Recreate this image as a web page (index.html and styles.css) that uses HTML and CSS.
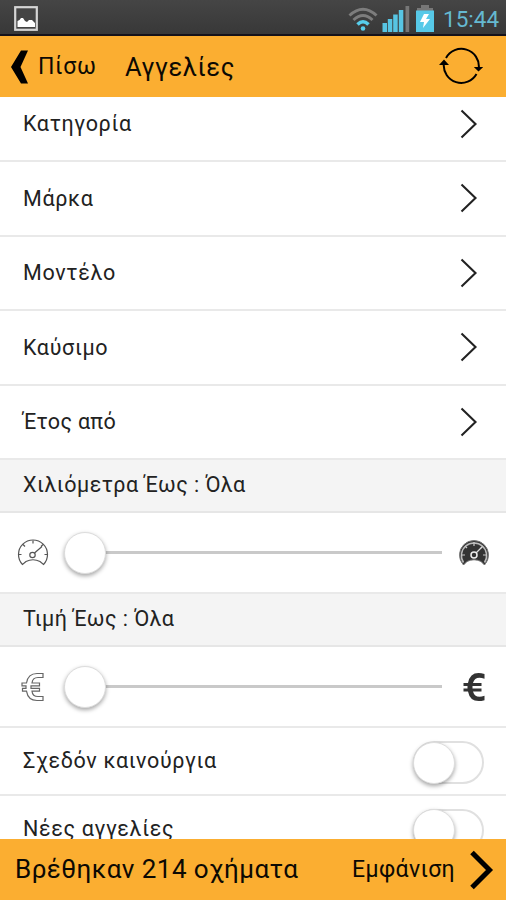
FILE: index.html
```html
<!DOCTYPE html>
<html lang="el">
<head>
<meta charset="utf-8">
<title>Αγγελίες</title>
<link rel="stylesheet" href="styles.css">
</head>
<body>
<svg width="0" height="0" class="defs">
  <symbol id="chevron" viewBox="0 0 18 30"><path d="M1.5 1.5 15.5 15 1.5 28.5" fill="none" stroke="#222" stroke-width="2.1"/></symbol>
</svg>
<div class="status">
  <svg class="picture" width="24" height="25" viewBox="0 0 24 25"><rect x="1.2" y="1.2" width="21.6" height="22.6" fill="#444" stroke="#d5d5d5" stroke-width="2.2"/><path d="M3.500 21v-6l2-1 1.500-2 2 0 2 3 2 1 2-2 3 0 3 3v4z" fill="#fff"/></svg>
  <svg class="wifi" width="30" height="24" viewBox="0 0 30 24" fill="none" stroke-width="3"><path d="M1.500 8.500Q15-4 28.500 8.500M5.500 13Q15 4 24.500 13" stroke="#7d7d7d"/><path d="M9.500 17.500Q15 12 20.500 17.500" stroke="#57cdeb" stroke-width="3.500"/><circle cx="15" cy="21.500" r="2.300" fill="#57cdeb"/></svg>
  <svg class="signal" width="28" height="26" viewBox="0 0 28 26"><path d="M.5 17h4.500v9H.5zM5.800 13h4.500v13H5.800zM11.200 8.500h4.500V26h-4.500zM16.800 4h4.500v22h-4.500z" fill="#57c5e3"/><path d="M23.500 0h3.700v26h-3.700z" fill="#777"/></svg>
  <svg class="battery" width="18" height="27" viewBox="0 0 18 27"><path d="M5 0h8v3h4v3H1V3h4z" fill="#777"/><path d="M0 5.500h18V27H0z" fill="#57c9e8"/><path d="m8 9-4 8h4l-1 6 7-9h-4l3-5z" fill="#fff"/></svg>
  <span class="clock">15:44</span>
</div>
<header class="bar top">
  <svg class="back" width="18" height="34" viewBox="0 0 18 34"><path d="M10 .5h7L9.500 17l7.500 16.500H10L0 17z"/></svg>
  <span class="back-label">Πίσω</span>
  <h1>Αγγελίες</h1>
  <svg class="refresh" width="44" height="40" viewBox="0 0 44 40"><g fill="none" stroke="#000" stroke-width="2"><path d="M7 11A17.500 17.500 0 0 1 39.800 21M37.500 27A17.500 17.500 0 0 1 4.800 17"/></g><path d="M0 18 5 12.500 10 18zM34.800 20h9.400L39.500 24.500z"/></svg>
</header>
<main>
  <div class="list">
    <div class="row"><span>Κατηγορία</span><svg width="18" height="30"><use href="#chevron"/></svg></div>
    <div class="row"><span>Μάρκα</span><svg width="18" height="30"><use href="#chevron"/></svg></div>
    <div class="row"><span>Μοντέλο</span><svg width="18" height="30"><use href="#chevron"/></svg></div>
    <div class="row"><span>Καύσιμο</span><svg width="18" height="30"><use href="#chevron"/></svg></div>
    <div class="row"><span class="year">Έτος από</span><svg width="18" height="30"><use href="#chevron"/></svg></div>
    <div class="section"><span>Χιλιόμετρα Έως : Όλα</span></div>
    <div class="slider">
      <svg width="32" height="28" viewBox="0 0 32 28" fill="none" stroke="#555" stroke-width="1.200"><path d="M5.500 25.500A14.500 14.500 0 1 1 26.500 25.500L23 22.500Q16 19 9 22.500Z"/><path d="M16 1.500v3M6 5.500l2 2M26 5.500l-2 2M1.500 15.500h3M27.500 15.500h3M17.500 14 25 7.500"/><circle cx="15.500" cy="16" r="2.700"/></svg>
      <div class="track"><i></i></div>
      <svg width="32" height="28" viewBox="0 0 32 28"><path d="M5.500 26A14.500 14.500 0 1 1 26.500 26L23 22.500Q16 19 9 22.500Z" fill="#333" stroke="#777" stroke-width="1"/><path d="M5.500 23.500A12.600 12.600 0 1 1 26.500 23.500" fill="none" stroke="#bbb" stroke-width="1.500"/><path d="M16 3v4M7 7l2 2M25 7l-2 2M3 16h4M25 16h4" stroke="#ccc" stroke-width="1.200"/><path d="M17 15 24 8" stroke="#ddd" stroke-width="1.300"/><circle cx="16" cy="16" r="3" fill="#333" stroke="#eee" stroke-width="1.500"/></svg>
    </div>
    <div class="section"><span>Τιμή Έως : Όλα</span></div>
    <div class="slider">
      <svg width="32" height="30" viewBox="0 0 32 30" fill="#fff" stroke="#666" stroke-width="1.200"><path d="M26 1.500v4h-5q-5.500 0-6 5.500h7.500v2.800H14v2.600h8.500v2.800H15q.5 5.300 6 5.300h5v4h-6q-9 0-10.500-9.300h-4v-2.800H9v-2.600H5V11h4.500q1.500-9.500 10.500-9.500z"/></svg>
      <div class="track"><i></i></div>
      <svg width="32" height="30" viewBox="0 0 32 30"><path d="M26.500 2v4.700Q17 3.500 15 11h8.500v2.900h-9v2.600h9v2.900H15q2 7.500 11.500 4.300v4.500Q12.500 32 10 19.400H5.500v-2.900h4v-2.600h-4V11H10Q12.500-2 26.500 2z" fill="#333"/></svg>
    </div>
    <div class="toggle-row"><span>Σχεδόν καινούργια</span><div class="switch"><i></i></div></div>
    <div class="toggle-row"><span>Νέες αγγελίες</span><div class="switch"><i></i></div></div>
  </div>
</main>
<footer class="bar">
  <span class="found">Βρέθηκαν 214 οχήματα</span>
  <span class="show">Εμφάνιση</span>
  <svg width="24" height="40" viewBox="0 0 24 40"><path d="M2 2.500 19.500 20 2 37.500" fill="none" stroke="#000" stroke-width="5"/></svg>
</footer>
</body>
</html>
```

FILE: styles.css
```css
* { box-sizing: border-box; }
body {
  margin: 0;
  height: 900px;
  display: flex;
  flex-direction: column;
  overflow: hidden;
  background: #fff;
  color: #222;
  font-family: Roboto, "Noto Sans", sans-serif;
  font-size: 21.5px;
  white-space: nowrap;
}
svg { flex: none; display: block; }
.defs { position: absolute; }
.status {
  flex: 0 0 36px;
  min-height: 0;
  display: flex;
  align-items: flex-start;
  background: linear-gradient(#454545, #383838);
  border-bottom: 2px solid #15121a;
}
.picture { margin: 6px auto 0 14px; }
.wifi { margin: 7px 4px 0 0; }
.signal { margin: 6px 6px 0 0; }
.battery { margin: 5px 9px 0 0; }
.clock {
  width: 63px;
  padding-top: 5px;
  line-height: 28px;
  font-size: 22.5px;
  color: #65b9d1;
}
.bar {
  flex: 0 0 61px;
  display: flex;
  align-items: center;
  background: #fbae31;
  color: #0c0903;
}
.back { margin-left: 11px; }
.back-label { width: 87px; margin-left: 9px; font-size: 23px; letter-spacing: 0.7px; }
h1 { margin: 0; font-size: 25.5px; font-weight: 400; letter-spacing: 0.6px; }
.refresh { margin: 0 23px 0 auto; }
main { flex: 1; min-height: 0; overflow: hidden; }
.list { margin-top: -9.5px; letter-spacing: 0.65px; }
.row {
  height: 74.5px;
  padding: 0 28px 0 23px;
  display: flex;
  align-items: center;
  justify-content: space-between;
  border-bottom: 2px solid #e9e9e9;
}
.year { letter-spacing: 0.3px; }
.section {
  height: 53px;
  padding: 0 0 2px 23px;
  letter-spacing: 0.45px;
  display: flex;
  align-items: center;
  background: #f4f4f4;
  border-bottom: 2px solid #e6e6e6;
}
.slider {
  height: 81px;
  padding: 0 16px 0 17px;
  display: flex;
  align-items: center;
  border-bottom: 2px solid #e9e9e9;
}
.track {
  flex: 1;
  height: 42px;
  margin: 0 16px 0 15px;
  display: flex;
  align-items: center;
  background: linear-gradient(#c9c9c9, #c9c9c9) center / 100% 3px no-repeat;
}
.track i, .switch i {
  width: 42px;
  height: 42px;
  border-radius: 50%;
  background: #fff;
  border: 1px solid #ddd;
  box-shadow: 0 2px 4px rgba(0, 0, 0, 0.35);
}
.toggle-row {
  height: 67.5px;
  padding: 0 22px 0 23px;
  display: flex;
  align-items: center;
  justify-content: space-between;
  border-bottom: 2px solid #e9e9e9;
}
.switch {
  width: 71px;
  height: 43px;
  margin-top: 4px;
  border: 2px solid #e0e0e0;
  border-radius: 22px;
  display: flex;
  align-items: center;
}
.switch i { margin-left: -2px; }
.found { width: 337px; padding: 0 0 2px 15px; font-size: 26px; letter-spacing: 0.45px; }
.show { width: 133px; margin-left: 15px; font-size: 23px; letter-spacing: 0.4px; }
footer svg { margin-right: 11px; margin-left: -15px; }
```
